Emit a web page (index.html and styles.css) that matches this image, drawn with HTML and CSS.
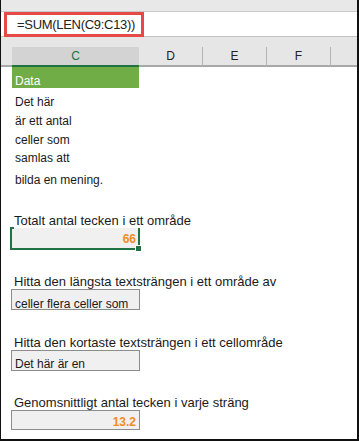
FILE: index.html
```html
<!DOCTYPE html>
<html lang="sv">
<head>
<meta charset="UTF-8">
<meta name="viewport" content="width=device-width, initial-scale=1.0">
<title>LEN i ett område</title>
<link rel="stylesheet" href="styles.css">
</head>
<body>
  <div class="frame">
    <div class="top-strip"></div>

    <div class="formula-bar">
      <div class="formula-box">=SUM(LEN(C9:C13))</div>
    </div>

    <div class="col-heads">
      <div class="corner"></div>
      <div class="col col-c">C</div>
      <div class="col col-mid">D</div>
      <div class="col col-mid">E</div>
      <div class="col col-mid">F</div>
      <div class="col col-rest"></div>
    </div>

    <div class="cells">
      <div class="data-head">Data</div>
      <div class="line l1">Det här</div>
      <div class="line l2">är ett antal</div>
      <div class="line l3">celler som</div>
      <div class="line l4">samlas att</div>
      <div class="line l5">bilda en mening.</div>

      <div class="label lb1">Totalt antal tecken i ett område</div>
      <div class="result selected"><span class="num">66</span></div>

      <div class="label lb2">Hitta den längsta textsträngen i ett område av</div>
      <div class="result text-box tb2">celler flera celler som</div>

      <div class="label lb3">Hitta den kortaste textsträngen i ett cellområde</div>
      <div class="result text-box tb3">Det här är en</div>

      <div class="label lb4">Genomsnittligt antal tecken i varje sträng</div>
      <div class="result num-box"><span class="num">13.2</span></div>
    </div>
  </div>
</body>
</html>
```

FILE: styles.css
```css
body {
  margin: 0;
  padding: 0;
  background: #fff;
  font-family: "Liberation Sans", Arial, sans-serif;
  color: #1a1a1a;
}

.frame {
  width: 359px;
  height: 441px;
  box-sizing: border-box;
  border-left: 1px solid #111;
  border-right: 2px solid #111;
  border-bottom: 2px solid #111;
  overflow: hidden;
}

.top-strip {
  height: 11px;
  background: #e8e8e8;
}

/* formula bar */
.formula-bar {
  display: flex;
  align-items: flex-start;
  height: 24px;
  background: #fff;
  border-top: 1px solid #c9c9c9;
  border-bottom: 1px solid #c2c2c2;
}
.formula-box {
  position: relative;
  margin-left: 3px;
  width: 140px;
  height: 25px;
  box-sizing: border-box;
  border: 3px solid #e64a45;
  padding: 2px 0 0 10px;
  font-size: 13px;
  line-height: 16px;
  letter-spacing: -0.3px;
  color: #222;
}

/* column headers */
.col-heads {
  display: flex;
  padding-top: 10px;
  background: #e6e6e6;
}
.corner,
.col {
  height: 18px;
  border-bottom: 2px solid #a8a8a8;
  font-size: 12px;
  line-height: 18px;
  text-align: center;
  color: #222;
}
.corner {
  width: 11px;
}
.col-c {
  width: 127px;
  background: #d3d3d3;
  color: #217346;
  border-bottom-color: #217346;
}
.col-mid {
  width: 63px;
  border-right: 1px solid #b5b5b5;
}
.col-rest {
  flex: 1;
}

/* sheet */
.cells {
  padding-left: 11px;
  font-size: 12px;
}
.data-head {
  width: 127px;
  height: 21px;
  box-sizing: border-box;
  padding: 7px 0 0 3px;
  line-height: 14px;
  background: #70ad47;
  color: #fff;
}
.line {
  padding-left: 3px;
  line-height: 14px;
  white-space: nowrap;
}
.l1 { margin-top: 7px; }
.l2 { margin-top: 5px; }
.l3 { margin-top: 5px; }
.l4 { margin-top: 4px; }
.l5 { margin-top: 8px; }

.label {
  padding-left: 2px;
  font-size: 13px;
  line-height: 14px;
  white-space: nowrap;
  color: #1a1a1a;
}
.lb1 { margin-top: 27px; }
.lb2 { margin-top: 25px; }
.lb3 { margin-top: 26px; }
.lb4 { margin-top: 25px; }

.result {
  position: relative;
  box-sizing: border-box;
  background: #f0f0f0;
  line-height: 14px;
  white-space: nowrap;
}
.num {
  font-weight: bold;
  color: #f28b24;
}

.selected {
  margin-left: -2px;
  width: 130px;
  height: 22px;
  padding: 4px 2px 0 0;
  text-align: right;
  border-left: 2px solid #217346;
  border-right: 2px solid #217346;
  border-bottom: 2px solid #217346;
}
.selected::before {
  content: "";
  position: absolute;
  top: -1px;
  left: -2px;
  width: 4px;
  height: 2px;
  background: #217346;
}
.selected::after {
  content: "";
  position: absolute;
  right: -4px;
  bottom: -4px;
  width: 5px;
  height: 5px;
  background: #217346;
  border: 1px solid #fff;
}

.text-box,
.num-box {
  margin-left: -1px;
  width: 129px;
  border: 1px solid #8c8c8c;
}
.text-box {
  height: 21px;
  padding-left: 3px;
}
.tb2 { padding-top: 7px; }
.tb3 { padding-top: 6px; }

.num-box {
  height: 20px;
  padding: 4px 3px 0 0;
  text-align: right;
}
```
